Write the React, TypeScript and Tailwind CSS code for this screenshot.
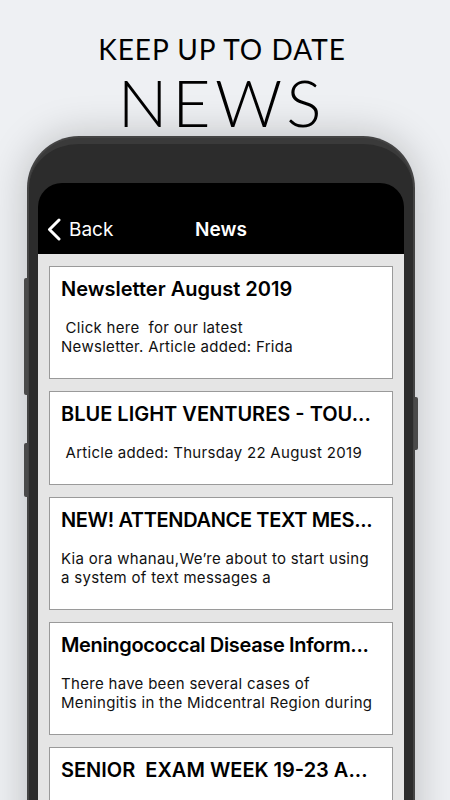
import React from "react";

type Article = { title: string; lines: string[]; tight?: boolean };

const articles: Article[] = [
  {
    title: "Newsletter August 2019",
    lines: [" Click here  for our latest", "Newsletter. Article added: Frida"],
  },
  {
    title: "BLUE LIGHT VENTURES - TOU...",
    lines: [" Article added: Thursday 22 August 2019"],
  },
  {
    title: "NEW! ATTENDANCE TEXT MES...",
    lines: ["Kia ora whanau,We’re about to start using", "a system of text messages a"],
    tight: true,
  },
  {
    title: "Meningococcal Disease Inform...",
    lines: ["There have been several cases of", "Meningitis in the Midcentral Region during"],
    tight: true,
  },
  {
    title: "SENIOR  EXAM WEEK 19-23 A...",
    lines: [],
  },
];

const ArticleCard: React.FC<{ article: Article }> = ({ article }) => {
  return (
    <div className="border border-[#9a9a9a] bg-white px-[11px] pt-[10px] pb-[22px]">
      <p
        className={
          article.tight
            ? "overflow-hidden whitespace-pre text-[20px] leading-[24px] font-semibold tracking-[-0.35px] text-black"
            : "overflow-hidden whitespace-pre text-[20px] leading-[24px] font-semibold text-black"
        }
      >
        {article.title}
      </p>
      <div className="mt-[17px] min-h-[19px] text-[15px] leading-[19px] tracking-[0.3px] text-[#111]">
        {article.lines.map((l) => (
          <p key={l} className="whitespace-pre">
            {l}
          </p>
        ))}
      </div>
    </div>
  );
};

const BackChevron = () => (
  <svg width="14" height="23" viewBox="0 0 14 23" fill="none">
    <polyline
      points="12,2 2.5,11.5 12,21"
      stroke="white"
      strokeWidth="3"
      strokeLinecap="round"
      strokeLinejoin="round"
    />
  </svg>
);

export default function App() {
  return (
    <div className="h-[800px] w-[450px] overflow-hidden bg-[#eef0f3] font-['Inter','Liberation_Sans',sans-serif]">
      <div className="flex flex-col items-center pr-[6px] pt-[35px] font-['Lato','Open_Sans',sans-serif] text-black">
        <h2 className="text-[28px] leading-[28px] font-normal tracking-[1px]">KEEP UP TO DATE</h2>
        <h1 className="mt-[6px] text-[66px] leading-[66px] font-light tracking-[4.5px]">NEWS</h1>
      </div>

      <div className="relative ml-[27px] mt-[1px] w-[388px] rounded-t-[52px] bg-[#444] p-[2px] pb-0 shadow-[0_0_40px_rgba(0,0,0,0.22)]">
        <span className="absolute -left-[3px] top-[142px] h-[117px] w-[4px] rounded-l-[2px] bg-[#4a4a4a]" />
        <span className="absolute -left-[3px] top-[307px] h-[54px] w-[4px] rounded-l-[2px] bg-[#4a4a4a]" />
        <span className="absolute -right-[3px] top-[261px] h-[53px] w-[4px] rounded-r-[2px] bg-[#4a4a4a]" />

        <div className="rounded-t-[50px] border-t-[6px] border-[#3a3a3a] bg-[#2c2c2c] px-[9px] pt-[39px]">
          <div className="overflow-hidden rounded-t-[24px] bg-black">
            <div className="grid h-[71px] grid-cols-[1fr_auto_1fr] pt-[35px] text-[19px] leading-[24px] text-white">
              <div className="flex items-start gap-[8px] pl-[9px]">
                <BackChevron />
                <span>Back</span>
              </div>
              <span className="font-semibold">News</span>
              <div />
            </div>

            <div className="flex flex-col gap-[12px] bg-[#e5e5e5] px-[11px] pt-[12px] pb-[20px]">
              {articles.map((a) => (
                <ArticleCard key={a.title} article={a} />
              ))}
            </div>
          </div>
        </div>
      </div>
    </div>
  );
}
